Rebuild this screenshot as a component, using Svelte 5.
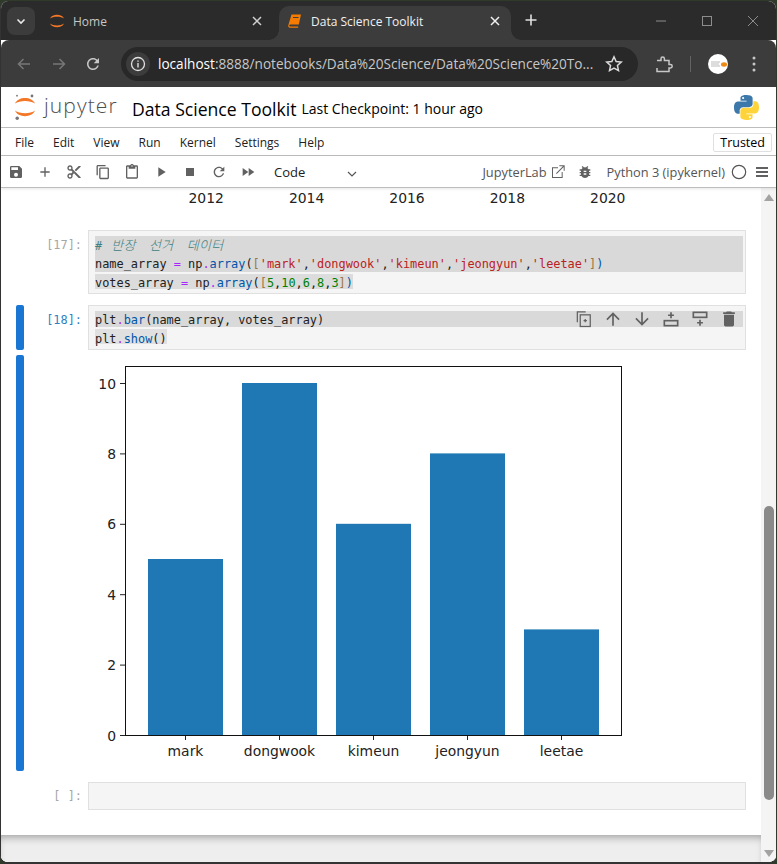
<script>
  const menus = ['File', 'Edit', 'View', 'Run', 'Kernel', 'Settings', 'Help'];
  const years = ['2012', '2014', '2016', '2018', '2020'];
  const H = 352 / 10;
  const bars = [
    { name: 'mark', v: 5, x: 60 },
    { name: 'dongwook', v: 10, x: 154 },
    { name: 'kimeun', v: 6, x: 248 },
    { name: 'jeongyun', v: 8, x: 342 },
    { name: 'leetae', v: 3, x: 436 }
  ];
  const ticks = [0, 2, 4, 6, 8, 10];
  const base = 380;
</script>

<div class="window">
  <div class="tabstrip">
    <button class="tabsearch" aria-label="tabs">
      <svg width="12" height="12" viewBox="0 0 12 12"><path d="M2.5 4.5 6 8l3.5-3.5" fill="none" stroke="#e8e8e8" stroke-width="1.6"/></svg>
    </button>
    <div class="tab home">
      <svg width="16" height="16" viewBox="0 0 16 16"><path d="M1 5.5C3 .5 13 .5 15 5.5 12 3 4 3 1 5.5Z M1 10.5C3 15.5 13 15.5 15 10.5 12 13 4 13 1 10.5Z" fill="#f37726"/></svg>
      <span class="tabtitle">Home</span>
      <svg class="tabx" width="10" height="10" viewBox="0 0 10 10"><path d="M1 1l8 8M9 1l-8 8" stroke="#d0d0d0" stroke-width="1.5"/></svg>
    </div>
    <div class="tab active">
      <svg width="16" height="16" viewBox="0 0 16 16"><path d="M4.5 1.5H14l-2.2 10H3.6a1 1 0 0 0-.6 2h8.3l-.3 1.2H3C1.600 14.700 1 13.500 1.300 12.200Z" fill="#f57c00"/><path d="M6 4.500h5.500" stroke="#3c3c3c" stroke-width="1"/></svg>
      <span class="tabtitle">Data Science Toolkit</span>
      <svg class="tabx" width="10" height="10" viewBox="0 0 10 10"><path d="M1 1l8 8M9 1l-8 8" stroke="#f0f0f0" stroke-width="1.500"/></svg>
    </div>
    <svg class="plus" width="12" height="12" viewBox="0 0 12 12"><path d="M6 0.500v11M0.500 6h11" stroke="#e0e0e0" stroke-width="1.600"/></svg>
    <div class="winctl">
      <svg width="12" height="12" viewBox="0 0 12 12"><path d="M1 6h10" stroke="#8d8d8d"/></svg>
      <svg width="12" height="12" viewBox="0 0 12 12"><rect x="1.500" y="1.500" width="9" height="9" fill="none" stroke="#8d8d8d"/></svg>
      <svg width="12" height="12" viewBox="0 0 12 12"><path d="M1 1l10 10M11 1 1 11" stroke="#8d8d8d"/></svg>
    </div>
  </div>

  <div class="navbar">
    <svg class="nav" width="16" height="16" viewBox="0 0 16 16"><path d="M14 8H2.500M7.500 3l-5 5 5 5" fill="none" stroke="#777" stroke-width="1.500"/></svg>
    <svg class="nav" width="16" height="16" viewBox="0 0 16 16"><path d="M2 8h11.500M8.500 3l5 5-5 5" fill="none" stroke="#777" stroke-width="1.500"/></svg>
    <svg class="nav reload" width="18" height="18" viewBox="0 0 24 24"><path fill="#c7c7c7" d="M17.650 6.350C16.200 4.900 14.210 4 12 4c-4.420 0-7.990 3.580-7.990 8s3.570 8 7.990 8c3.730 0 6.840-2.550 7.730-6h-2.080c-.82 2.330-3.040 4-5.650 4-3.310 0-6-2.690-6-6s2.690-6 6-6c1.660 0 3.140.69 4.220 1.780L13 11h7V4l-2.350 2.350z"/></svg>
    <div class="omnibox">
      <span class="info">
        <svg width="16" height="16" viewBox="0 0 16 16"><circle cx="8" cy="8" r="6.500" fill="none" stroke="#e0e0e0" stroke-width="1.300"/><path d="M8 7v4.500M8 4.500v1.300" stroke="#e0e0e0" stroke-width="1.400"/></svg>
      </span>
      <span class="url"><b>localhost</b>:8888/notebooks/Data%20Science/Data%20Science%20To...</span>
      <svg width="18" height="18" viewBox="0 0 18 18"><path d="M9 1.800l2.150 4.700 5.100.6-3.800 3.450 1.050 5.050L9 13.050l-4.500 2.550 1.050-5.050-3.800-3.450 5.100-.6Z" fill="none" stroke="#dcdcdc" stroke-width="1.500"/></svg>
    </div>
    <svg class="ext" width="18" height="18" viewBox="0 0 18 18"><path d="M2 5.500h4V3.700a1.700 1.700 0 0 1 3.400 0V5.500h4.600v4h1.500a1.700 1.700 0 0 1 0 3.400H14v3.600H2v-3.600" fill="none" stroke="#c7c7c7" stroke-width="1.500"/></svg>
    <span class="divider"></span>
    <span class="avatar">
      <svg width="20" height="20" viewBox="0 0 20 20"><circle cx="10" cy="10" r="10" fill="#fff"/><path d="M3 8h9M3 10h8M3 12h9" stroke="#bbb"/><ellipse cx="16" cy="10.500" rx="3" ry="2.200" fill="#ef8a17"/></svg>
    </span>
    <svg class="dots" width="4" height="16" viewBox="0 0 4 16"><circle cx="2" cy="2" r="1.500" fill="#c7c7c7"/><circle cx="2" cy="8" r="1.500" fill="#c7c7c7"/><circle cx="2" cy="14" r="1.500" fill="#c7c7c7"/></svg>
  </div>

  <header class="jphead">
    <div class="logo">
      <svg width="22" height="28" viewBox="0 0 22 28">
        <path d="M1 10.500C4 3 18 3 21 10.500 16.500 7 5.500 7 1 10.500Z M1 17.500C4 25 18 25 21 17.500 16.500 21 5.500 21 1 17.500Z" fill="#f37726"/>
        <circle cx="18" cy="3" r="1.400" fill="#767677"/><circle cx="3" cy="2.700" r="0.900" fill="#767677"/><circle cx="3.200" cy="25.300" r="1.700" fill="#767677"/>
      </svg>
      <span class="jname">jupyter</span>
    </div>
    <span class="nbname">Data Science Toolkit</span>
    <span class="ckpt">Last Checkpoint: 1 hour ago</span>
    <svg class="pylogo" width="25" height="25" viewBox="0 0 110 110">
      <path fill="#3c78aa" d="M54.900 0C26.800 0 28.600 12.200 28.600 12.200l0 12.600h26.800v3.800H17.900S0 26.500 0 54.900s15.700 27.400 15.700 27.400h9.300V69.100s-.5-15.700 15.400-15.700h26.600s14.900.2 14.900-14.400V14.900S84.200 0 54.900 0zM40.200 8.500a4.800 4.800 0 1 1 0 9.600 4.800 4.800 0 0 1 0-9.600z"/>
      <path fill="#ffd43b" transform="rotate(180 55 55)" d="M54.900 0C26.800 0 28.600 12.200 28.600 12.200l0 12.600h26.800v3.800H17.900S0 26.500 0 54.900s15.700 27.400 15.700 27.400h9.300V69.100s-.5-15.700 15.400-15.700h26.600s14.900.2 14.900-14.400V14.900S84.200 0 54.900 0zM40.200 8.500a4.800 4.800 0 1 1 0 9.600 4.800 4.800 0 0 1 0-9.600z"/>
    </svg>
  </header>

  <nav class="menubar">
    {#each menus as m}<span class="menu">{m}</span>{/each}
    <span class="trusted">Trusted</span>
  </nav>

  <div class="toolbar">
    <svg class="ti" viewBox="0 0 24 24"><path d="M17 3H5a2 2 0 0 0-2 2v14a2 2 0 0 0 2 2h14a2 2 0 0 0 2-2V7l-4-4zm-5 16a3 3 0 1 1 0-6 3 3 0 0 1 0 6zm3-10H5V5h10v4z"/></svg>
    <svg class="ti" viewBox="0 0 24 24"><path d="M19 13h-6v6h-2v-6H5v-2h6V5h2v6h6v2z"/></svg>
    <svg class="ti" viewBox="0 0 24 24"><path d="M9.640 7.640c.23-.5.36-1.050.36-1.640 0-2.210-1.790-4-4-4S2 3.790 2 6s1.790 4 4 4c.59 0 1.140-.13 1.640-.36L10 12l-2.360 2.360C7.140 14.130 6.590 14 6 14c-2.210 0-4 1.790-4 4s1.790 4 4 4 4-1.790 4-4c0-.59-.13-1.140-.36-1.640L12 14l7 7h3v-1L9.640 7.640zM6 8c-1.100 0-2-.89-2-2s.9-2 2-2 2 .89 2 2-.9 2-2 2zm0 12c-1.100 0-2-.89-2-2s.9-2 2-2 2 .89 2 2-.9 2-2 2zm6-7.500c-.28 0-.5-.22-.5-.5s.22-.5.5-.5.5.22.5.5-.22.5-.5.5zM19 3l-6 6 2 2 7-7V3h-3z"/></svg>
    <svg class="ti" viewBox="0 0 18 18"><path d="M11.900 1H3.200C2.400 1 1.700 1.700 1.700 2.500v10.200h1.500V2.500h8.700V1z M14.200 3.900h-8c-.8 0-1.500.7-1.500 1.500v10.200c0 .8.7 1.500 1.500 1.500h8c.8 0 1.500-.7 1.500-1.500V5.400c0-.8-.6-1.500-1.500-1.500z M14.200 15.500h-8V5.400h8V15.500z"/></svg>
    <svg class="ti" viewBox="0 0 24 24"><path d="M19 2h-4.180C14.400.84 13.300 0 12 0c-1.300 0-2.400.84-2.820 2H5c-1.100 0-2 .9-2 2v16c0 1.100.9 2 2 2h14c1.100 0 2-.9 2-2V4c0-1.100-.9-2-2-2zm-7 0c.55 0 1 .45 1 1s-.45 1-1 1-1-.45-1-1 .45-1 1-1zm7 18H5V4h2v3h10V4h2v16z"/></svg>
    <svg class="ti" viewBox="0 0 24 24"><path d="M8 5v14l11-7z"/></svg>
    <svg class="ti" viewBox="0 0 24 24"><path d="M6 6h12v12H6z"/></svg>
    <svg class="ti" viewBox="0 0 24 24"><path d="M17.650 6.350C16.200 4.900 14.210 4 12 4c-4.420 0-7.990 3.580-7.990 8s3.570 8 7.990 8c3.730 0 6.840-2.550 7.730-6h-2.080c-.82 2.330-3.040 4-5.650 4-3.310 0-6-2.690-6-6s2.690-6 6-6c1.660 0 3.140.69 4.220 1.780L13 11h7V4l-2.350 2.350z"/></svg>
    <svg class="ti" viewBox="0 0 24 24"><path d="M4 18l8.500-6L4 6v12zm9-12v12l8.500-6L13 6z"/></svg>
    <div class="celltype">
      <span>Code</span>
      <svg width="12" height="12" viewBox="0 0 12 12"><path d="M2 4l4 4 4-4" fill="none" stroke="#555" stroke-width="1.200"/></svg>
    </div>
    <span class="jlab">JupyterLab</span>
    <svg class="launch" width="16" height="16" viewBox="0 0 24 24"><path fill="#616161" d="M19 21H3V5h9v1.500H4.500v13h13V12H19zM14 2v1.500h5.400L9 13.900l1.100 1.100L20.500 4.600V10H22V2z"/></svg>
    <svg class="bug" width="16" height="16" viewBox="0 0 24 24"><path fill="#616161" d="M20 8h-2.810c-.45-.78-1.070-1.450-1.820-1.960L17 4.410 15.590 3l-2.170 2.170C12.960 5.060 12.490 5 12 5c-.49 0-.96.06-1.410.17L8.410 3 7 4.410l1.620 1.630C7.880 6.550 7.260 7.220 6.810 8H4v2h2.090c-.05.33-.09.66-.09 1v1H4v2h2v1c0 .34.04.67.09 1H4v2h2.810c1.040 1.790 2.970 3 5.190 3s4.150-1.210 5.190-3H20v-2h-2.090c.05-.33.09-.66.09-1v-1h2v-2h-2v-1c0-.34-.04-.67-.09-1H20V8zm-6 8h-4v-2h4v2zm0-4h-4v-2h4v2z"/></svg>
    <span class="kernel">Python 3 (ipykernel)</span>
    <svg width="16" height="16" viewBox="0 0 16 16"><circle cx="8" cy="8" r="6.700" fill="none" stroke="#555" stroke-width="1.200"/></svg>
    <svg class="ham" width="12" height="12" viewBox="0 0 12 12"><path d="M0 2h12M0 6h12M0 10h12" stroke="#616161" stroke-width="2"/></svg>
  </div>

  <div class="main">
    <div class="content">
      <div class="years">
        {#each years as y}<span class="year">{y}</span>{/each}
      </div>

      <div class="cell c17">
        <span class="bar off"></span>
        <span class="prompt">[17]:</span>
        <div class="input">
          <div class="line top full"><i class="cmt"># <span class="ko">반장</span> <span class="ko">선거</span> <span class="ko">데이터</span></i></div>
          <div class="line mid full">name_array <b class="op">=</b> np<b class="op">.</b><span class="fn">array</span>(<span class="br">[</span><span class="st">'mark'</span>,<span class="st">'dongwook'</span>,<span class="st">'kimeun'</span>,<span class="st">'jeongyun'</span>,<span class="st">'leetae'</span><span class="br">]</span><span class="fn">)</span></div>
          <div class="line bot fit">votes_array <b class="op">=</b> np<b class="op">.</b><span class="fn">array</span>(<span class="br">[</span><span class="nu">5</span>,<span class="nu">10</span>,<span class="nu">6</span>,<span class="nu">8</span>,<span class="nu">3</span><span class="br">]</span><span class="fn">)</span></div>
        </div>
      </div>

      <div class="cell c18">
        <span class="bar"></span>
        <span class="prompt act">[18]:</span>
        <div class="input">
          <div class="line one full">plt<b class="op">.</b><span class="fn">bar</span>(name_array, votes_array)</div>
          <div class="line last fit">plt<b class="op">.</b><span class="fn">show</span>()</div>
          <div class="celltools">
            <svg viewBox="0 0 24 24" fill="none" stroke="#616161" stroke-width="1.500"><path d="M4 16V3.500h10"/><rect x="7.500" y="7" width="12" height="14"/><path d="M13.500 12v4M11.500 14h4"/></svg>
            <svg viewBox="0 0 24 24"><path fill="#616161" d="M4 12l1.410 1.410L11 7.830V20h2V7.830l5.580 5.590L20 12l-8-8-8 8z"/></svg>
            <svg viewBox="0 0 24 24"><path fill="#616161" d="M20 12l-1.410-1.410L13 16.170V4h-2v12.170l-5.580-5.590L4 12l8 8 8-8z"/></svg>
            <svg viewBox="0 0 24 24" fill="none" stroke="#616161" stroke-width="2"><rect x="4" y="14" width="16" height="6"/><path d="M12 4v7M8.500 7.500h7"/></svg>
            <svg viewBox="0 0 24 24" fill="none" stroke="#616161" stroke-width="2"><rect x="4" y="4" width="16" height="6"/><path d="M12 13v7M8.500 16.500h7"/></svg>
            <svg viewBox="0 0 24 24"><path fill="#616161" d="M6 19c0 1.100.9 2 2 2h8c1.100 0 2-.9 2-2V7H6v12zM19 4h-3.500l-1-1h-5l-1 1H5v2h14V4z"/></svg>
          </div>
        </div>
      </div>

      <div class="cell output">
        <span class="bar"></span>
        <span></span>
        <svg class="chart" width="658" height="416" viewBox="0 0 658 416">
          {#each bars as b}
            <rect x={b.x} y={base - b.v * H} width="75" height={b.v * H} fill="#1f77b4"/>
            <path d="M{b.x + 37.500} {base}v5" stroke="#222" stroke-width="1"/>
            <text class="tick" x={b.x + 37.500} y="401" text-anchor="middle">{b.name}</text>
          {/each}
          <rect x="37.500" y="11.500" width="496" height="369" fill="none" stroke="#111" stroke-width="1"/>
          {#each ticks as t}
            <path d="M32 {base - t * H + .5}h5" stroke="#222" stroke-width="1"/>
            <text class="tick" x="28" y={base - t * H + 5.500} text-anchor="end">{t}</text>
          {/each}
        </svg>
      </div>

      <div class="cell empty">
        <span class="bar off"></span>
        <span class="prompt">[ ]:</span>
        <div class="input blank"></div>
      </div>
    </div>

    <div class="scrollbar">
      <span class="arrow up"></span>
      <div class="track"><span class="thumb"></span></div>
      <span class="arrow down"></span>
    </div>
    <div class="footer"></div>
  </div>
</div>

<style>
  :global(body) {
    margin: 0;
    background: #2f3a2b;
    overflow: hidden;
  }
  .window {
    width: 776px;
    height: 863px;
    margin-top: 1px;
    box-sizing: border-box;
    border-left: 1px solid #333;
    border-bottom: 2px solid #333;
    border-radius: 8px;
    overflow: hidden;
    display: flex;
    flex-direction: column;
    font-family: "Open Sans", "Noto Sans", sans-serif;
    background: #fff;
  }
  svg { display: block; flex: none; }

  .tabstrip {
    height: 39px;
    flex: none;
    background: #2b2b2b;
    display: flex;
    align-items: flex-end;
    position: relative;
  }
  .tabsearch {
    width: 28px;
    height: 28px;
    margin: 0 0 5px 6px;
    border: 0;
    padding: 0;
    background: #3c3c3c;
    border-radius: 8px;
    display: flex;
    align-items: center;
    justify-content: center;
  }
  .tab {
    height: 34px;
    display: flex;
    align-items: center;
    box-sizing: border-box;
    position: relative;
    padding-bottom: 4px;
  }
  .tab.home { width: 244px; padding-left: 14px; }
  .tab.home .tabx { margin-right: 17px; }
  .tab.active {
    width: 232px;
    padding-left: 8px;
    background: #3c3c3c;
    border-radius: 10px 10px 0 0;
  }
  .tab.active::before, .tab.active::after {
    content: "";
    position: absolute;
    bottom: 0;
    width: 10px;
    height: 10px;
    background: radial-gradient(circle at 0 0, transparent 9.500px, #3c3c3c 10px);
  }
  .tab.active::before { left: -10px; }
  .tab.active::after { right: -10px; background: radial-gradient(circle at 100% 0, transparent 9.500px, #3c3c3c 10px); }
  .tabtitle {
    font-size: 12px;
    margin-left: 8px;
    color: #c7c7c7;
    flex: 1;
    white-space: nowrap;
  }
  .active .tabtitle { color: #f0f0f0; }
  .tabx { margin-right: 11px; margin-bottom: 1px; }
  .plus { margin: 0 0 14px 14px; }
  .winctl {
    margin-left: auto;
    display: flex;
    gap: 34px;
    padding-right: 17px;
    margin-bottom: 13px;
  }

  .navbar {
    height: 47px;
    flex: none;
    background: #3c3c3c;
    display: flex;
    align-items: center;
    border-radius: 8px 8px 0 0;
    padding-left: 15px;
    box-sizing: border-box;
  }
  .nav { margin-right: 19px; }
  .nav.reload { margin-right: 19px; margin-left: -2px; }
  .omnibox {
    width: 517px;
    height: 34px;
    border-radius: 17px;
    background: #282828;
    display: flex;
    align-items: center;
    padding: 0 15px 0 5px;
    box-sizing: border-box;
  }
  .info {
    width: 24px;
    height: 24px;
    border-radius: 50%;
    background: #3c3c3c;
    display: flex;
    align-items: center;
    justify-content: center;
    flex: none;
  }
  .url {
    margin-left: 8px;
    flex: 1;
    font-size: 13.600px;
    color: #c7c7c7;
    white-space: nowrap;
    overflow: hidden;
  }
  .url b { font-weight: 400; color: #fff; }
  .ext { margin-left: 17px; }
  .divider { width: 1px; height: 16px; background: #636363; margin-left: 17px; }
  .avatar { margin-left: 17px; }
  .dots { margin-left: 24px; }

  .jphead {
    height: 41px;
    flex: none;
    display: flex;
    align-items: center;
    box-sizing: border-box;
    border-bottom: 1px solid #bdbdbd;
    color: #000;
    padding-left: 13px;
  }
  .logo { display: flex; align-items: center; width: 118px; flex: none; }
  .jname {
    font-family: "Open Sans", sans-serif;
    font-weight: 300;
    font-size: 21px;
    color: #4e4e4e;
    margin: -5px 0 0 8px;
    letter-spacing: 1.100px;
  }
  .nbname { font-size: 17.600px; margin-top: 3px; white-space: nowrap; }
  .ckpt { font-size: 14px; margin: 3px 0 0 5px; white-space: nowrap; }
  .pylogo { margin-left: auto; margin-right: 17px; }

  .menubar {
    height: 28px;
    flex: none;
    display: flex;
    align-items: center;
    box-sizing: border-box;
    border-bottom: 1px solid #bdbdbd;
    padding: 2px 0 0 14px;
    gap: 19px;
    font-size: 12px;
    color: #212121;
  }
  .trusted {
    margin-left: auto;
    margin-right: 4px;
    font-size: 12.500px;
    border: 1px solid #e0e0e0;
    border-radius: 2px;
    padding: 0 6px;
    line-height: 17px;
    color: #000;
  }

  .toolbar {
    height: 32px;
    flex: none;
    display: flex;
    align-items: center;
    box-sizing: border-box;
    border-bottom: 1px solid #bdbdbd;
    padding: 1px 0 0 7px;
    font-size: 12.800px;
    color: #424242;
    box-shadow: 0 1px 3px rgba(0,0,0,.1);
    position: relative;
    z-index: 1;
    background: #fff;
  }
  .ti {
    width: 16px;
    height: 16px;
    margin-right: 13px;
    fill: #616161;
  }
  .celltype {
    width: 84px;
    display: flex;
    justify-content: space-between;
    align-items: center;
    color: #212121;
    margin-left: 5px;
  }
  .celltype span { font-size: 13px; }
  .celltype svg { margin-top: 3px; }
  .jlab { margin-left: auto; color: #555; }
  .launch { margin-left: 3px; }
  .bug { margin-left: 11px; }
  .kernel { margin-left: 14px; white-space: nowrap; color: #555; }
  .kernel + svg { margin-left: 6px; }
  .ham { margin: 0 8px 0 9px; }

  .main {
    flex: 1;
    min-height: 0;
    display: grid;
    grid-template-columns: 1fr 15px;
    grid-template-rows: 1fr 27px;
    background: #fff;
  }
  .content {
    padding-right: 15px;
    min-width: 0;
  }
  .years {
    height: 42px;
    box-sizing: border-box;
    padding: 2px 0 0 155px;
    display: flex;
  }
  .year {
    width: 100.400px;
    text-align: center;
    font-family: "DejaVu Sans", sans-serif;
    font-size: 13.900px;
    line-height: 17px;
    color: #222;
  }
  .cell {
    display: grid;
    grid-template-columns: 8px 64px 1fr;
    padding-left: 15px;
    margin-bottom: 11px;
  }
  .c18 { margin-bottom: 5px; }
  .output { margin-bottom: 11px; }
  .bar { background: #1976d2; border-radius: 2px; }
  .bar.off { background: transparent; }
  .prompt {
    font-family: "DejaVu Sans Mono", monospace;
    font-size: 11.900px;
    color: #a6a6a6;
    text-align: right;
    line-height: 19px;
    padding: 6px 6px 0 0;
  }
  .prompt.act { color: #307fc1; }
  .input {
    background: #f5f5f5;
    border: 1px solid #e0e0e0;
    padding: 4px 2px 1px 6px;
    position: relative;
    font-family: "DejaVu Sans Mono", monospace;
    font-size: 11.900px;
    color: #212121;
  }
  .line {
    height: 19px;
    line-height: 20px;
    white-space: pre;
    --sel: #d9d9d9;
  }
  .line.fit { width: fit-content; }
  .top { background: linear-gradient(var(--sel) 0 0) 0 1px / 100% 18px no-repeat; }
  .mid { background: linear-gradient(var(--sel) 0 0) 0 0 / 100% 18px no-repeat; }
  .bot { background: linear-gradient(#dcdcdc 0 0) 0 1px / 100% 15px no-repeat; }
  .one { background: linear-gradient(var(--sel) 0 0) 0 1px / 100% 16px no-repeat; }
  .last { background: linear-gradient(#e0e0e0 0 0) 0 0 / 100% 15px no-repeat; }
  .cmt { color: #408080; }
  .ko {
    font-family: "Noto Sans CJK KR", sans-serif;
    font-weight: 300;
    font-size: 13px;
    letter-spacing: .3px;
    margin-left: 2px;
  }
  .ko + .ko { margin-left: 6px; }
  .op { color: #aa22ff; font-weight: 400; }
  .fn { color: #0055aa; }
  .br { color: #997744; }
  .st { color: #ba2121; }
  .nu { color: #008000; }
  .celltools {
    position: absolute;
    top: 3px;
    right: 6px;
    display: flex;
    gap: 9px;
  }
  .celltools svg { width: 20px; height: 20px; }
  .chart { grid-column: 3; overflow: visible; }
  .tick {
    font-family: "DejaVu Sans", sans-serif;
    font-size: 13.900px;
    fill: #222;
  }
  .blank { height: 28px; padding: 0; box-sizing: border-box; }
  .empty .prompt { padding-top: 5px; }

  .scrollbar {
    grid-column: 2;
    grid-row: 1 / 3;
    background: #f4f4f4;
    display: flex;
    flex-direction: column;
    align-items: center;
    padding: 6px 0 5px;
    box-sizing: border-box;
  }
  .track { flex: 1; width: 100%; padding-top: 305px; display: flex; flex-direction: column; align-items: center; }
  .thumb { display: block; width: 10px; height: 294px; background: #8a8a8a; border-radius: 5px; }
  .arrow { width: 0; height: 0; border-left: 5px solid transparent; border-right: 5px solid transparent; }
  .arrow.up { border-bottom: 7px solid #a3a3a3; }
  .arrow.down { border-top: 7px solid #a3a3a3; }
  .footer {
    grid-column: 1;
    grid-row: 2;
    background: #eee;
    box-shadow: inset 0 6px 8px -4px rgba(0,0,0,.35);
  }
</style>
